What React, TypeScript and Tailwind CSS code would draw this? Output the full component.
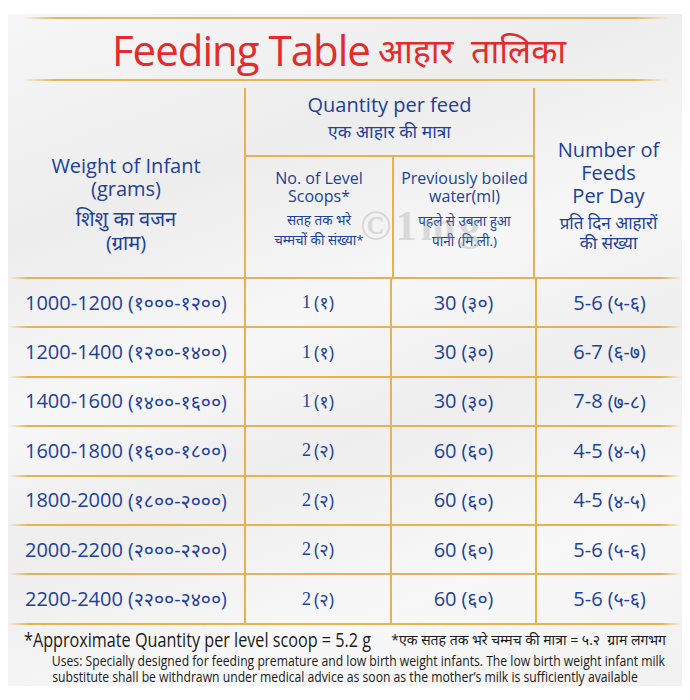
import React from "react";

const rows = [
  ["1000-1200", "(१०००-१२००)", "1", "(१)", "30", "(३०)", "5-6", "(५-६)"],
  ["1200-1400", "(१२००-१४००)", "1", "(१)", "30", "(३०)", "6-7", "(६-७)"],
  ["1400-1600", "(१४००-१६००)", "1", "(१)", "30", "(३०)", "7-8", "(७-८)"],
  ["1600-1800", "(१६००-१८००)", "2", "(२)", "60", "(६०)", "4-5", "(४-५)"],
  ["1800-2000", "(१८००-२०००)", "2", "(२)", "60", "(६०)", "4-5", "(४-५)"],
  ["2000-2200", "(२०००-२२००)", "2", "(२)", "60", "(६०)", "5-6", "(५-६)"],
  ["2200-2400", "(२२००-२४००)", "2", "(२)", "60", "(६०)", "5-6", "(५-६)"],
];

const lineBg =
  "bg-[linear-gradient(to_right,transparent,#e9b152_3%,#e9b152_97%,transparent)] bg-no-repeat bg-bottom bg-[length:100%_2px]";

export default function App() {
  return (
    <div
      className="w-[690px] h-[700px] bg-white pt-[14px] px-[8px]"
      style={{ fontFamily: "'Open Sans', 'Noto Sans', 'Noto Sans Devanagari', sans-serif" }}
    >
      <div className="relative h-[672px] w-[674px] bg-[linear-gradient(160deg,#f6f6f6_0%,#ededed_25%,#f7f7f7_45%,#eeeeee_60%,#f8f8f8_80%,#f1f1f1_100%)] text-[#21409b]">
        {/* Title */}
        <div className="h-[74px] flex flex-col">
          <div className="mt-[3px] mx-[14px] h-[2px] bg-[linear-gradient(to_right,transparent,#e8b55c_5%,#e8b55c_95%,transparent)]" />
          <div className="h-[60px] flex items-center justify-center gap-[8px] text-[#e32b2b] pt-[2px] pr-[12px]">
            <span className="text-[42px] leading-none tracking-[-1px]">Feeding Table</span>
            <span className="text-[34px] leading-none">आहार&nbsp; तालिका</span>
          </div>
          <div className="mx-[14px] h-[2px] bg-[linear-gradient(to_right,transparent,#e8b55c_5%,#e8b55c_95%,transparent)]" />
        </div>

        {/* Header */}
        <div className={`grid grid-cols-[236px_146px_145px_147px] h-[191px] ${lineBg}`}>
          <div className="flex flex-col items-center pt-[66px] text-center">
            <div className="text-[20px] leading-[23px]">Weight of Infant</div>
            <div className="text-[20px] leading-[23px]">(grams)</div>
            <div className="text-[20px] leading-[24px] mt-[7px]">शिशु का वजन</div>
            <div className="text-[20px] leading-[24px]">(ग्राम)</div>
          </div>
          <div className="col-span-2 border-l-2 border-r-2 border-[#e9b152] flex flex-col">
            <div className="h-[69px] border-b-2 border-[#e9b152] flex flex-col items-center pt-[3px]">
              <div className="text-[20px] leading-[27px]">Quantity per feed</div>
              <div className="text-[17.5px] leading-[26px]">एक आहार की मात्रा</div>
            </div>
            <div className="flex-1 grid grid-cols-[146px_143px]">
              <div className="flex flex-col items-center pt-[12px] text-center">
                <div className="text-[16px] leading-[18px]">No. of Level</div>
                <div className="text-[16px] leading-[18px]">Scoops*</div>
                <div className="text-[13.5px] leading-[20px] mt-[5px]">सतह तक भरे</div>
                <div className="text-[13.5px] leading-[20px]">चम्मचों की संख्या*</div>
              </div>
              <div className="border-l-2 border-[#e9b152] flex flex-col items-center pt-[12px] text-center">
                <div className="text-[16px] leading-[18px]">Previously boiled</div>
                <div className="text-[16px] leading-[18px]">water(ml)</div>
                <div className="text-[13.5px] leading-[20px] mt-[6px]">पहले से उबला हुआ</div>
                <div className="text-[13.5px] leading-[20px]">पानी (मि.ली.)</div>
              </div>
            </div>
          </div>
          <div className="flex flex-col items-center pt-[50px] text-center">
            <div className="text-[20px] leading-[23px]">Number of</div>
            <div className="text-[20px] leading-[23px]">Feeds</div>
            <div className="text-[20px] leading-[23px]">Per Day</div>
            <div className="text-[17px] leading-[20px] mt-[6px]">प्रति दिन आहारों</div>
            <div className="text-[17px] leading-[20px]">की संख्या</div>
          </div>
        </div>

        {/* Rows */}
        {rows.map((r, i) => (
          <div key={i} className={`grid grid-cols-[236px_146px_145px_147px] h-[49.4px] ${lineBg}`}>
            <div className="flex items-center pl-[17px] pb-[2px] whitespace-nowrap">
              <span className="text-[20px]">{r[0]}</span>
              <span className="text-[19.5px] ml-[5px]">{r[1]}</span>
            </div>
            <div className="border-l-2 border-[#e9b152] flex items-center justify-center pb-[2px] whitespace-nowrap">
              <span className="text-[18px]" style={{ fontFamily: "'Liberation Serif', serif" }}>{r[2]}</span>
              <span className="text-[18px] ml-[3px]">{r[3]}</span>
            </div>
            <div className="border-l-2 border-[#e9b152] flex items-center justify-center pb-[2px] whitespace-nowrap">
              <span className="text-[20px]">{r[4]}</span>
              <span className="text-[19.5px] ml-[5px]">{r[5]}</span>
            </div>
            <div className="border-l-2 border-[#e9b152] flex items-center justify-center pb-[2px] whitespace-nowrap">
              <span className="text-[20px]">{r[6]}</span>
              <span className="text-[19.5px] ml-[5px]">{r[7]}</span>
            </div>
          </div>
        ))}

        {/* Footer */}
        <div className="flex items-center px-[16px] mt-[1px] h-[27px] text-[#1a1a1a] whitespace-nowrap">
          <div className="w-[346px] text-[19.5px] origin-left scale-x-[0.83]">
            *Approximate Quantity per level scoop = 5.2 g
          </div>
          <div className="ml-auto text-[14px]">*एक सतह तक भरे चम्मच की मात्रा = ५.२ &nbsp;ग्राम लगभग</div>
        </div>
        <div className="text-center text-[14px] leading-[16px] text-[#1a1a1a] scale-x-[0.87] whitespace-nowrap">
          <div>Uses: Specially designed for feeding premature and low birth weight infants. The low birth weight infant milk</div>
          <div>substitute shall be withdrawn under medical advice as soon as the mother’s milk is sufficiently available</div>
        </div>

        {/* Watermark */}
        <div
          className="absolute left-[352px] top-[191px] text-[42px] font-bold tracking-[4px] text-[#9a9a9a] opacity-30 leading-none pointer-events-none"
          style={{ fontFamily: "'Liberation Serif', serif" }}
        >
          ©1mg
        </div>
      </div>
    </div>
  );
}
